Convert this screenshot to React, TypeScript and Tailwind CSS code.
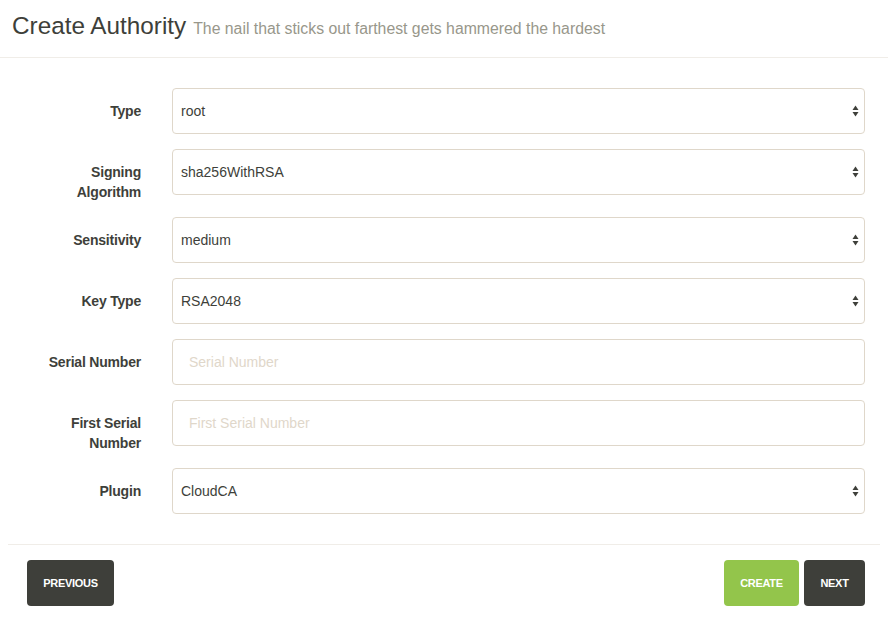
import React from "react";

const font = { fontFamily: '"Liberation Sans", Arial, Helvetica, sans-serif' };

type Field = {
  label: string[];
  kind: "select" | "input";
  value: string;
};

const fields: Field[] = [
  { label: ["Type"], kind: "select", value: "root" },
  { label: ["Signing", "Algorithm"], kind: "select", value: "sha256WithRSA" },
  { label: ["Sensitivity"], kind: "select", value: "medium" },
  { label: ["Key Type"], kind: "select", value: "RSA2048" },
  { label: ["Serial Number"], kind: "input", value: "Serial Number" },
  { label: ["First Serial", "Number"], kind: "input", value: "First Serial Number" },
  { label: ["Plugin"], kind: "select", value: "CloudCA" },
];

function SelectArrows() {
  return (
    <svg width="7" height="12" viewBox="0 0 7 12" className="shrink-0">
      <path d="M3.5 0.5 L6.5 5 L0.5 5 Z" fill="#3e3f3a" />
      <path d="M3.5 11.5 L6.5 7 L0.5 7 Z" fill="#3e3f3a" />
    </svg>
  );
}

export default function App() {
  return (
    <div className="w-[888px] h-[627px] bg-white text-[#3e3f3a]" style={font}>
      {/* Header */}
      <div className="h-[58px] border-b border-[#f0ede8] px-[12px] pt-[11px] flex items-baseline gap-[7px]">
        <h3 className="text-[24.3px] leading-[30px] text-[#3e3f3a]">Create Authority</h3>
        <small className="text-[15.8px] text-[#98978b]">
          The nail that sticks out farthest gets hammered the hardest
        </small>
      </div>

      {/* Form */}
      <div className="pt-[30px] pl-[12px] pr-[23px] flex flex-col gap-[15px]">
        {fields.map((f) => (
          <div key={f.label.join(" ")} className="flex items-start gap-[31px]">
            <label className="w-[129px] shrink-0 text-right font-bold text-[14px] leading-[20px] pt-[13px] tracking-[-0.2px] text-[#3e3f3a]">
              {f.label.map((l) => (
                <div key={l}>{l}</div>
              ))}
            </label>
            {f.kind === "select" ? (
              <div className="flex-1 h-[46px] rounded-[4px] border border-[#dfd7ca] flex items-center justify-between pl-[8px] pr-[5px] text-[14px]">
                <span>{f.value}</span>
                <SelectArrows />
              </div>
            ) : (
              <div className="flex-1 h-[46px] rounded-[4px] border border-[#dfd7ca] flex items-center pl-[16px] text-[14px] text-[#dfd7ca]">
                {f.value}
              </div>
            )}
          </div>
        ))}
      </div>

      {/* Footer */}
      <div className="mt-[30px] mx-[8px] border-t border-[#f0ede8] pt-[15px] px-[19px] pr-[15px] flex items-center justify-between">
        <button className="h-[46px] w-[87px] rounded-[4px] bg-[#3e3f3a] text-white text-[11px] font-bold uppercase tracking-[-0.3px]">
          Previous
        </button>
        <div className="flex gap-[5px]">
          <button className="h-[46px] w-[75px] rounded-[4px] bg-[#93c54b] text-white text-[11px] font-bold uppercase tracking-[-0.3px]">
            Create
          </button>
          <button className="h-[46px] w-[61px] rounded-[4px] bg-[#3e3f3a] text-white text-[11px] font-bold uppercase tracking-[-0.3px]">
            Next
          </button>
        </div>
      </div>
    </div>
  );
}
